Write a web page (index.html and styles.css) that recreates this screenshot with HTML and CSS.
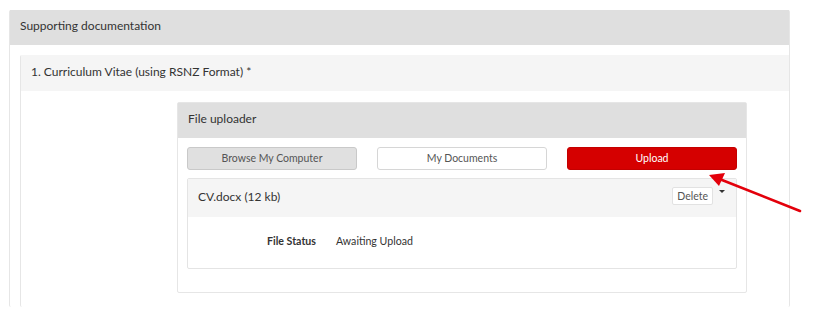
FILE: index.html
```html
<!DOCTYPE html>
<html lang="en">

<head>
    <meta charset="UTF-8">
    <meta name="viewport" content="width=device-width, initial-scale=1.0">
    <title>Supporting documentation</title>
    <link rel="stylesheet" href="styles.css">
</head>

<body>
    <div class="panel outer-panel">
        <div class="panel-heading">Supporting documentation</div>
        <div class="outer-body">
            <div class="panel inner-panel">
                <div class="panel-heading light">1. Curriculum Vitae (using RSNZ Format) *</div>
                <div class="inner-body">
                    <div class="panel uploader">
                        <div class="panel-heading">File uploader</div>
                        <div class="uploader-body">
                            <div class="button-row">
                                <button class="btn btn-browse">Browse My Computer</button>
                                <button class="btn btn-docs">My Documents</button>
                                <button class="btn btn-upload">Upload</button>
                            </div>
                            <div class="file-item">
                                <div class="file-heading">
                                    <span class="file-name">CV.docx (12 kb)</span>
                                    <span class="file-actions">
                                        <button class="btn-delete">Delete</button>
                                        <span class="caret"></span>
                                    </span>
                                </div>
                                <div class="file-body">
                                    <span class="field-label">File Status</span>
                                    <span class="field-value">Awaiting Upload</span>
                                </div>
                            </div>
                        </div>
                    </div>
                </div>
            </div>
        </div>
    </div>

    <!-- annotation arrow pointing at the upload button -->
    <svg class="arrow" width="819" height="314" viewBox="0 0 819 314">
        <line x1="800" y1="211" x2="722" y2="180" stroke="#e3000b" stroke-width="2.6" stroke-linecap="round" />
        <polygon points="709,175 725,173 719,186" fill="#e3000b" />
    </svg>
</body>

</html>
```

FILE: styles.css
```css
body {
    font-family: Lato, 'Open Sans', sans-serif;
    color: #333;
    margin: 0;
    padding: 10px 0 0 9px;
    background-color: #fff;
    height: 314px;
    box-sizing: border-box;
    overflow: hidden;
}

.panel {
    border: 1px solid #e6e6e6;
    border-radius: 2px;
    background-color: #fff;
}

.panel-heading {
    background-color: #dfdfdf;
    font-size: 12px;
    line-height: 32px;
    height: 35px;
    padding: 0 10px;
}

.panel-heading.light {
    background-color: #f5f5f5;
    height: 36px;
    line-height: 34px;
}

.outer-panel {
    width: 779px;
    border-bottom: none;
    border-top: none;
}

.outer-body {
    padding: 10px 0 0 10px;
}

.inner-panel {
    border-bottom: none;
    border-top: none;
    border-right: none;
}

.inner-body {
    padding: 11px 0 14px 156px;
}

.uploader {
    width: 568px;
}

.uploader-body {
    padding: 9px 9px 23px 9px;
}

.button-row {
    display: flex;
    gap: 20px;
}

.btn {
    flex: 1;
    height: 23px;
    font-family: Lato, 'Open Sans', sans-serif;
    font-size: 10.5px;
    color: #555;
    border: 1px solid #d6d6d6;
    border-radius: 3px;
    background-color: #fff;
    padding: 0 0 2px 0;
}

.btn-browse {
    background-color: #e0e0e0;
    border-color: #c9c9c9;
}

.btn-upload {
    background-color: #d50000;
    border-color: #c40000;
    color: #fff;
}

.file-item {
    margin-top: 8px;
    border: 1px solid #e4e4e4;
    border-radius: 2px;
}

.file-heading {
    background-color: #f5f5f5;
    height: 38px;
    display: flex;
    align-items: center;
    justify-content: space-between;
    padding: 0 11px 3px 10px;
    box-sizing: border-box;
}

.file-name {
    font-size: 12px;
}

.file-actions {
    display: flex;
    align-items: flex-start;
    gap: 6px;
    margin-top: -2px;
}

.btn-delete {
    font-family: Lato, 'Open Sans', sans-serif;
    font-size: 10.5px;
    color: #555;
    background-color: #fff;
    border: 1px solid #e2e2e2;
    border-radius: 2px;
    height: 18px;
    padding: 0 4px;
}

.caret {
    width: 0;
    height: 0;
    margin-top: 3px;
    border-left: 3px solid transparent;
    border-right: 3px solid transparent;
    border-top: 3px solid #333;
}

.file-body {
    display: flex;
    align-items: center;
    height: 51px;
    padding-bottom: 4px;
    box-sizing: border-box;
    font-size: 10.6px;
}

.field-label {
    width: 128px;
    text-align: right;
    font-weight: bold;
}

.field-value {
    margin-left: 20px;
}

.arrow {
    position: absolute;
    top: 0;
    left: 0;
    pointer-events: none;
}
```
